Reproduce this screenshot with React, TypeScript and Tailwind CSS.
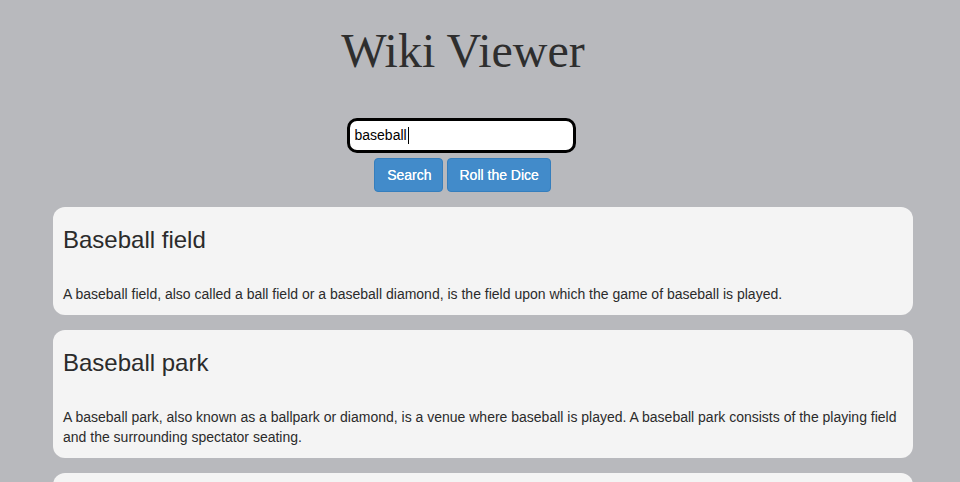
import React from 'react';

interface Article {
  title: string;
  extract: string;
}

const articles: Article[] = [
  {
    title: 'Baseball field',
    extract:
      'A baseball field, also called a ball field or a baseball diamond, is the field upon which the game of baseball is played.',
  },
  {
    title: 'Baseball park',
    extract:
      'A baseball park, also known as a ballpark or diamond, is a venue where baseball is played. A baseball park consists of the playing field and the surrounding spectator seating.',
  },
  {
    title: 'Baseball',
    extract:
      'Baseball is a bat-and-ball game played between two opposing teams who take turns batting and fielding.',
  },
];

function ResultCard({ title, extract }: Article) {
  return (
    <div className="rounded-[12px] bg-[#f4f4f4] px-[10px]">
      <h3 className="pt-[20px] text-[24px] leading-[26px] font-normal">{title}</h3>
      <p className="mt-[31px] pb-[11px] text-[14px] leading-[20px]">{extract}</p>
    </div>
  );
}

export default function App() {
  return (
    <div
      className="min-h-screen bg-[#b8b9bd] text-[#2b2b2b]"
      style={{ fontFamily: '"Liberation Sans", Arial, sans-serif' }}
    >
      <div className="flex flex-col items-center pr-[38px]">
        <h1
          className="mt-[24px] ml-[4px] text-[48px] leading-[53px] font-normal text-[#2e2e2e]"
          style={{ fontFamily: '"Liberation Serif", "Times New Roman", serif' }}
        >
          Wiki Viewer
        </h1>

        {/* search box */}
        <div className="mt-[41px] flex h-[35px] w-[229px] items-center rounded-[10px] border-[3px] border-black bg-white pl-[5px] text-[14px] text-black">
          <span>baseball</span>
          <span className="ml-px h-[17px] w-px bg-black"></span>
        </div>

        <div className="mt-[5px] ml-[3px] flex gap-[4px]">
          <button className="h-[34px] rounded-[4px] border border-[#357ebd] bg-[#428bca] pr-[11px] pl-[12px] text-[14px] text-white [text-shadow:0_0_0.4px_#fff]">
            Search
          </button>
          <button className="h-[34px] rounded-[4px] border border-[#357ebd] bg-[#428bca] px-[11px] text-[14px] text-white [text-shadow:0_0_0.4px_#fff]">
            Roll the Dice
          </button>
        </div>
      </div>

      {/* results */}
      <div className="mt-[15px] ml-[53px] flex w-[860px] flex-col gap-[15px]">
        {articles.map((a) => (
          <ResultCard key={a.title} title={a.title} extract={a.extract} />
        ))}
      </div>
    </div>
  );
}
